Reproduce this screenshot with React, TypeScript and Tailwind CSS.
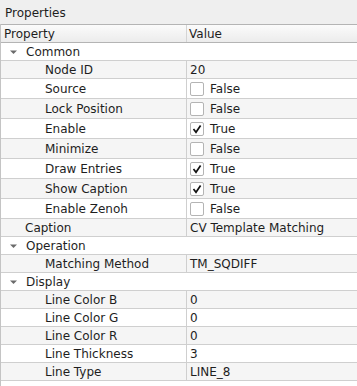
import React from "react";

type Row =
  | { kind: "group"; label: string }
  | { kind: "prop"; label: string; value: string; depth: number }
  | { kind: "check"; label: string; checked: boolean; depth: number };

const rows: Row[] = [
  { kind: "group", label: "Common" },
  { kind: "prop", label: "Node ID", value: "20", depth: 1 },
  { kind: "check", label: "Source", checked: false, depth: 1 },
  { kind: "check", label: "Lock Position", checked: false, depth: 1 },
  { kind: "check", label: "Enable", checked: true, depth: 1 },
  { kind: "check", label: "Minimize", checked: false, depth: 1 },
  { kind: "check", label: "Draw Entries", checked: true, depth: 1 },
  { kind: "check", label: "Show Caption", checked: true, depth: 1 },
  { kind: "check", label: "Enable Zenoh", checked: false, depth: 1 },
  { kind: "prop", label: "Caption", value: "CV Template Matching", depth: 0 },
  { kind: "group", label: "Operation" },
  { kind: "prop", label: "Matching Method", value: "TM_SQDIFF", depth: 1 },
  { kind: "group", label: "Display" },
  { kind: "prop", label: "Line Color B", value: "0", depth: 1 },
  { kind: "prop", label: "Line Color G", value: "0", depth: 1 },
  { kind: "prop", label: "Line Color R", value: "0", depth: 1 },
  { kind: "prop", label: "Line Thickness", value: "3", depth: 1 },
  { kind: "prop", label: "Line Type", value: "LINE_8", depth: 1 },
];

const Arrow = () => (
  <svg width="9" height="6" viewBox="0 0 9 6" className="mx-[8px]">
    <path d="M1 1.5 L8 1.5 L4.5 5 Z" fill="#6b6b6b" />
  </svg>
);

const CheckBox = ({ checked }: { checked: boolean }) => (
  <div className="w-[14px] h-[14px] border border-[#b4b4b4] rounded-[2px] bg-white flex items-center justify-center">
    {checked && (
      <svg width="10" height="10" viewBox="0 0 10 10">
        <path d="M1.5 5 L4 8.2 L8.6 1.5" stroke="#111" strokeWidth="1.7" fill="none" />
      </svg>
    )}
  </div>
);

export default function App() {
  return (
    <div
      className="w-[357px] h-[386px] bg-[#efefef] text-[12px] text-[#1e1e1e] overflow-hidden"
      style={{ fontFamily: "'DejaVu Sans', sans-serif" }}
    >
      <div className="h-[24px] pl-[5px] flex items-center pt-[1px]">Properties</div>
      <div className="bg-white h-[362px] border-l border-[#c4c4c4]">
        <div className="flex h-[19px] border-t border-b border-[#b4b4b4] bg-gradient-to-b from-[#fbfbfb] to-[#ececec]">
          <div className="w-[186px] border-r border-[#d4d4d4] pl-[3px] flex items-center">Property</div>
          <div className="flex-1 pl-[2px] flex items-center">Value</div>
        </div>
        {rows.map((r, i) => {
          const bg = i % 2 === 0 ? "bg-white" : "bg-[#f5f5f5]";
          if (r.kind === "group") {
            return (
              <div key={i} className={`flex items-center h-[18px] border-b border-[#cfcfcf] ${bg}`}>
                <Arrow />
                <span>{r.label}</span>
              </div>
            );
          }
          const pad = r.depth === 1 ? "pl-[44px]" : "pl-[24px]";
          return (
            <div
              key={i}
              className={`flex ${r.kind === "check" ? "h-[20px]" : "h-[18px]"} border-b border-[#cfcfcf] ${bg}`}
            >
              <div className={`w-[186px] border-r border-[#cfcfcf] ${pad} flex items-center`}>{r.label}</div>
              <div className="flex-1 pl-[3px] flex items-center">
                {r.kind === "check" ? (
                  <>
                    <CheckBox checked={r.checked} />
                    <span className="ml-[6px]">{r.checked ? "True" : "False"}</span>
                  </>
                ) : (
                  <span>{r.value}</span>
                )}
              </div>
            </div>
          );
        })}
      </div>
    </div>
  );
}
